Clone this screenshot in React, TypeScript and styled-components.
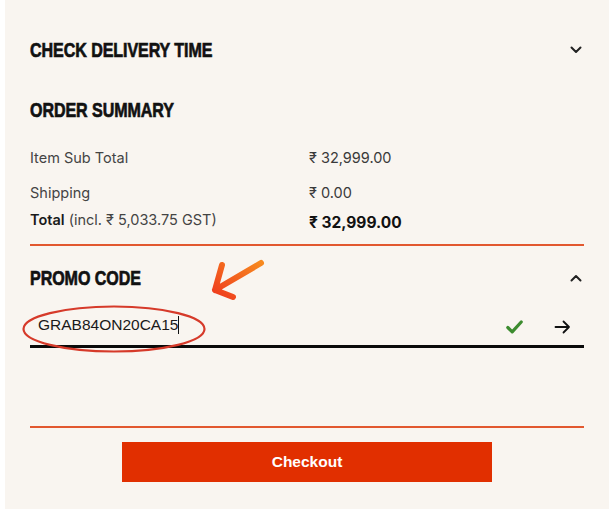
import React from "react";
import styled, { createGlobalStyle } from "styled-components";

const Global = createGlobalStyle`
  html, body { margin: 0; padding: 0; background: #ffffff; }
  body { font-family: "Inter", "Noto Sans", sans-serif; }
  * { box-sizing: border-box; }
`;

const Panel = styled.div`
  position: relative;
  width: 604px;
  margin-left: 5px;
  background: #f9f5f0;
  padding: 38px 25px 27px 25px;
  display: flex;
  flex-direction: column;
`;

const HeadingRow = styled.div<{ $mb: number }>`
  display: flex;
  align-items: center;
  justify-content: space-between;
  height: 24px;
  margin-bottom: ${(p) => p.$mb}px;
`;

const Heading = styled.h2`
  margin: 0;
  display: inline-block;
  font-family: "Liberation Sans", Arial, sans-serif;
  font-weight: 700;
  font-size: 21px;
  line-height: 24px;
  color: #111;
  letter-spacing: -0.1px;
  -webkit-text-stroke: 0.7px #111;
  text-transform: uppercase;
  transform: scaleX(0.765);
  transform-origin: left center;
  white-space: nowrap;
`;

const IconBox = styled.span`
  display: inline-flex;
  width: 14px;
  height: 16px;
  align-items: center;
  justify-content: center;
  margin-right: 1px;
`;

const SummaryGrid = styled.div`
  display: grid;
  grid-template-columns: 279px 1fr;
  row-gap: 15px;
`;

const Label = styled.div`
  font-size: 14.5px;
  line-height: 20px;
  color: #444;
`;

const Value = styled.div`
  font-size: 14.5px;
  line-height: 20px;
  color: #3a3a3a;
`;

const TotalGrid = styled.div`
  display: grid;
  grid-template-columns: 279px 1fr;
  margin-top: 7px;
  margin-bottom: 11px;
`;

const TotalLabel = styled.div`
  font-size: 14.5px;
  line-height: 20px;
  color: #444;
  b { color: #1a1a1a; font-weight: 600; }
`;

const TotalValue = styled.div`
  font-size: 15.5px;
  line-height: 20px;
  font-weight: 700;
  color: #111;
  padding-top: 3px;
`;

const Divider = styled.div<{ $mb: number }>`
  flex: none;
  height: 2px;
  background-color: #e2582f;
  margin-bottom: ${(p) => p.$mb}px;
`;

const PromoRow = styled.div`
  position: relative;
  display: flex;
  align-items: center;
  height: 40px;
  padding: 0 13px 0 8px;
  border-bottom: 3px solid #0a0a0a;
  margin-bottom: 78px;
`;

const PromoText = styled.div`
  flex: 1;
  display: flex;
  align-items: center;
  font-family: "Liberation Sans", Arial, sans-serif;
  font-size: 15.5px;
  color: #1a1a1a;
  padding-bottom: 4px;
`;

const Caret = styled.span`
  display: inline-block;
  width: 1px;
  height: 18px;
  background: #111;
`;

const ActionIcons = styled.div`
  display: flex;
  align-items: center;
  gap: 31px;
`;

const Ellipse = styled.svg`
  position: absolute;
  left: -9px;
  top: -4px;
  pointer-events: none;
`;

const ArrowMark = styled.svg`
  position: absolute;
  left: 200px;
  top: 252px;
  pointer-events: none;
`;

const CheckoutButton = styled.button`
  align-self: center;
  width: 370px;
  height: 40px;
  margin-top: 14px;
  border: none;
  background: #e12f00;
  color: #fff;
  font-family: "Liberation Sans", Arial, sans-serif;
  font-weight: 700;
  font-size: 15.5px;
  cursor: pointer;
`;

const Chevron = ({ up }: { up?: boolean }) => (
  <svg width="12" height="8" viewBox="0 0 12 8">
    <polyline
      points={up ? "1.5,6.5 6,2 10.5,6.5" : "1.5,1.5 6,6 10.5,1.5"}
      fill="none"
      stroke="#222"
      strokeWidth="2"
      strokeLinecap="round"
      strokeLinejoin="round"
    />
  </svg>
);

export default function App() {
  return (
    <>
      <Global />
      <Panel>
        <HeadingRow $mb={36}>
          <Heading>Check Delivery Time</Heading>
          <IconBox>
            <Chevron />
          </IconBox>
        </HeadingRow>

        <HeadingRow $mb={26}>
          <Heading>Order Summary</Heading>
        </HeadingRow>

        <SummaryGrid>
          <Label>Item Sub Total</Label>
          <Value>₹ 32,999.00</Value>
          <Label>Shipping</Label>
          <Value>₹ 0.00</Value>
        </SummaryGrid>
        <TotalGrid>
          <TotalLabel>
            <b>Total</b> (incl. ₹ 5,033.75 GST)
          </TotalLabel>
          <TotalValue>₹ 32,999.00</TotalValue>
        </TotalGrid>

        <Divider $mb={20} />

        <HeadingRow $mb={18}>
          <Heading>Promo Code</Heading>
          <IconBox>
            <Chevron up />
          </IconBox>
        </HeadingRow>

        <PromoRow>
          <PromoText>
            GRAB84ON20CA15
            <Caret />
          </PromoText>
          <ActionIcons>
            <svg width="17" height="14" viewBox="0 0 17 14">
              <polyline
                points="1.8,7.5 6.2,11.8 15.2,2"
                fill="none"
                stroke="#3d8c2f"
                strokeWidth="3.2"
                strokeLinecap="round"
                strokeLinejoin="round"
              />
            </svg>
            <svg width="17" height="14" viewBox="0 0 17 14">
              <path
                d="M1.5 7 H15 M9.5 1.5 L15 7 L9.5 12.5"
                fill="none"
                stroke="#111"
                strokeWidth="1.8"
                strokeLinecap="round"
                strokeLinejoin="round"
              />
            </svg>
          </ActionIcons>
          <Ellipse width="186" height="52" viewBox="0 0 186 52">
            <ellipse cx="93" cy="25" rx="90.5" ry="22.5" fill="none" stroke="#d63a2a" strokeWidth="2.2" />
          </Ellipse>
        </PromoRow>

        <Divider $mb={0} />

        <CheckoutButton>Checkout</CheckoutButton>

        <ArrowMark width="70" height="52" viewBox="0 0 70 52">
          <defs>
            <linearGradient id="arrowGrad" x1="1" y1="0" x2="0" y2="1">
              <stop offset="0" stopColor="#f7891f" />
              <stop offset="1" stopColor="#ef3b1e" />
            </linearGradient>
          </defs>
          <path
            d="M56 11 L10 38 M17 13 L10 38 L28 45"
            fill="none"
            stroke="url(#arrowGrad)"
            strokeWidth="6"
            strokeLinecap="round"
            strokeLinejoin="round"
          />
        </ArrowMark>
      </Panel>
    </>
  );
}
